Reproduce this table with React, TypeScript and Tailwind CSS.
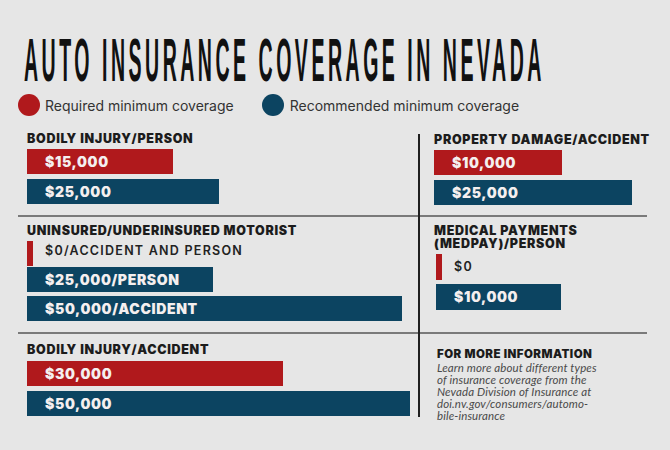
import React from "react";

const RED = "bg-[#b0191c]";
const BLUE = "bg-[#0c4461]";

interface BarProps {
  label: string;
  width: string;
  color: string;
}

function Bar({ label, width, color }: BarProps) {
  return (
    <div
      className={`${color} ${width} h-[25px] flex items-center pl-[18px] text-[14px] font-black tracking-[0.045em] text-[#f4efef] font-['Inter',sans-serif] leading-none`}
    >
      {label}
    </div>
  );
}

function Label({ children, small }: { children: React.ReactNode; small?: boolean }) {
  return (
    <div
      className={`${small ? "text-[11.5px] tracking-[0.04em]" : "text-[12.5px] tracking-[0.055em]"} whitespace-nowrap leading-[13px] font-black text-[#1c1c1c] font-['Inter',sans-serif]`}
    >
      {children}
    </div>
  );
}

export default function App() {
  return (
    <div className="w-[670px] h-[450px] bg-[#e6e6e6] overflow-hidden">
      {/* title */}
      <div className="pt-[30px] pl-[24px] h-[90px] overflow-visible">
        <div className="origin-left scale-x-[0.32] whitespace-nowrap text-[61px] leading-none text-[#111] font-['Liberation_Sans',sans-serif] font-bold tracking-[0.18em]">
          AUTO INSURANCE COVERAGE IN NEVADA
        </div>
      </div>

      {/* legend */}
      <div className="flex items-center pl-[18px] h-[32px] -mt-[1px] font-['Inter',sans-serif] text-[14px] text-[#333]">
        <span className="w-[22px] h-[22px] rounded-full bg-[#b0191c]" />
        <span className="ml-[5px]">Required minimum coverage</span>
        <span className="ml-[28px] w-[22px] h-[22px] rounded-full bg-[#0c4461]" />
        <span className="ml-[6px]">Recommended minimum coverage</span>
      </div>

      {/* chart grid */}
      <div className="mt-[11px] ml-[18px] grid grid-cols-[400px_2px_227px] grid-rows-[83px_2px_115px_2px_83px]">
        {/* row 1 */}
        <div className="col-start-1 row-start-1 pl-[9px] flex flex-col">
          <Label>BODILY INJURY/PERSON</Label>
          <div className="mt-[4px] flex flex-col gap-[5px]">
            <Bar label="$15,000" width="w-[146px]" color={RED} />
            <Bar label="$25,000" width="w-[192px]" color={BLUE} />
          </div>
        </div>
        <div className="col-start-3 row-start-1 pl-[14px] pt-[1px] flex flex-col">
          <Label>PROPERTY DAMAGE/ACCIDENT</Label>
          <div className="mt-[4px] flex flex-col gap-[5px]">
            <Bar label="$10,000" width="w-[128px]" color={RED} />
            <Bar label="$25,000" width="w-[198px]" color={BLUE} />
          </div>
        </div>

        <div className="col-start-1 col-end-4 row-start-2 bg-[#7a7a7a]" />

        {/* row 2 */}
        <div className="col-start-1 row-start-3 pl-[9px] pt-[7px] flex flex-col">
          <Label>UNINSURED/UNDERINSURED MOTORIST</Label>
          <div className="mt-[4px] flex items-start">
            <div className="w-[6px] h-[25px] bg-[#b0191c]" />
            <span className="ml-[12px] mt-[4px] text-[12.5px] leading-none font-semibold tracking-[0.1em] text-[#222] font-['Inter',sans-serif]">
              $0/ACCIDENT AND PERSON
            </span>
          </div>
          <div className="mt-[1px] flex flex-col gap-[4px]">
            <Bar label="$25,000/PERSON" width="w-[186px]" color={BLUE} />
            <Bar label="$50,000/ACCIDENT" width="w-[375px]" color={BLUE} />
          </div>
        </div>
        <div className="col-start-3 row-start-3 pl-[14px] pt-[7px] flex flex-col">
          <Label>
            <div>MEDICAL PAYMENTS</div>
            <div>(MEDPAY)/PERSON</div>
          </Label>
          <div className="mt-[4px] flex items-center pl-[2px]">
            <div className="w-[6px] h-[26px] bg-[#b0191c]" />
            <span className="ml-[12px] text-[12.5px] leading-none font-semibold tracking-[0.1em] text-[#222] font-['Inter',sans-serif]">
              $0
            </span>
          </div>
          <div className="mt-[4px] pl-[2px]">
            <Bar label="$10,000" width="w-[125px] h-[26px]" color={BLUE} />
          </div>
        </div>

        <div className="col-start-1 col-end-4 row-start-4 bg-[#7a7a7a]" />

        {/* row 3 */}
        <div className="col-start-1 row-start-5 pl-[9px] pt-[9px] flex flex-col">
          <Label>BODILY INJURY/ACCIDENT</Label>
          <div className="mt-[5px] flex flex-col gap-[5px]">
            <Bar label="$30,000" width="w-[256px]" color={RED} />
            <Bar label="$50,000" width="w-[383px]" color={BLUE} />
          </div>
        </div>
        <div className="col-start-3 row-start-5 pl-[17px] pt-[14px] flex flex-col">
          <Label small>FOR MORE INFORMATION</Label>
          <p className="mt-[1px] text-[11.5px] leading-[12px] italic tracking-[0.01em] text-[#4a4a4a] font-['Lato',sans-serif]">
            Learn more about different types
            <br />
            of insurance coverage from the
            <br />
            Nevada Division of Insurance at
            <br />
            doi.nv.gov/consumers/automo-
            <br />
            bile-insurance
          </p>
        </div>

        {/* vertical rule */}
        <div className="col-start-2 row-start-1 row-end-6 mt-[2px] bg-[#1f1f1f] relative z-10" />
      </div>
    </div>
  );
}
